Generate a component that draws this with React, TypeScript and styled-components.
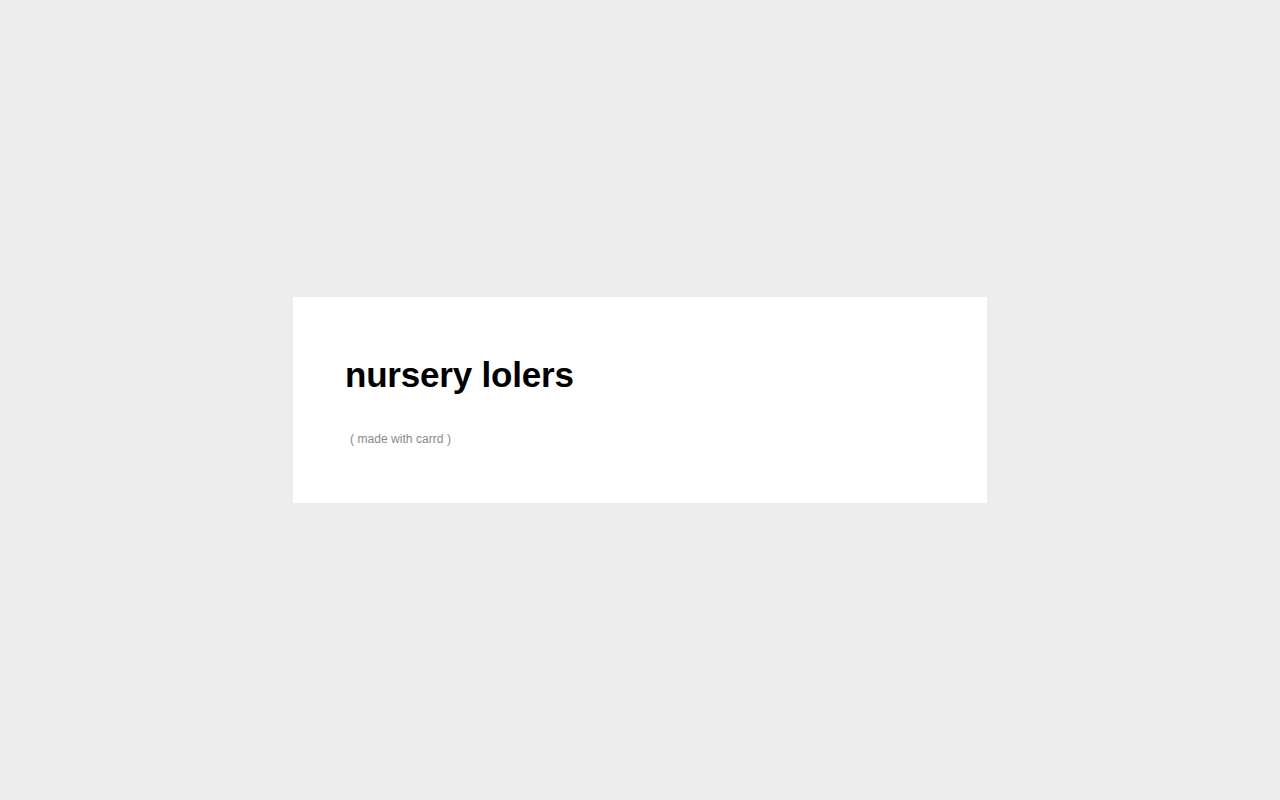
import * as React from 'react';
import styled, { createGlobalStyle } from 'styled-components';

const GlobalStyle = createGlobalStyle`
  html, body {
    margin: 0;
    padding: 0;
    background: #ededed;
  }
  body {
    font-family: "Liberation Sans", Arial, sans-serif;
  }
`

const Page = styled.div`
  min-height: 800px;
  display: flex;
  align-items: center;
  justify-content: center;
`

const Card = styled.div`
  width: 694px;
  height: 206px;
  box-sizing: border-box;
  background: #fff;
  padding: 57px 52px 0;
`

const Title = styled.h1`
  margin: 0;
  font-size: 35px;
  line-height: 42px;
  font-weight: 700;
  color: #000;
  letter-spacing: -0.2px;
`

const Credit = styled.p`
  margin: 37px 0 0 5px;
  font-size: 12px;
  line-height: 1;
  color: #888;
  letter-spacing: 0.05px;
`

export default function App() {
  return (
    <>
      <GlobalStyle />
      <Page>
        <Card>
          <Title>nursery lolers</Title>
          <Credit>( made with carrd )</Credit>
        </Card>
      </Page>
    </>
  )
}
